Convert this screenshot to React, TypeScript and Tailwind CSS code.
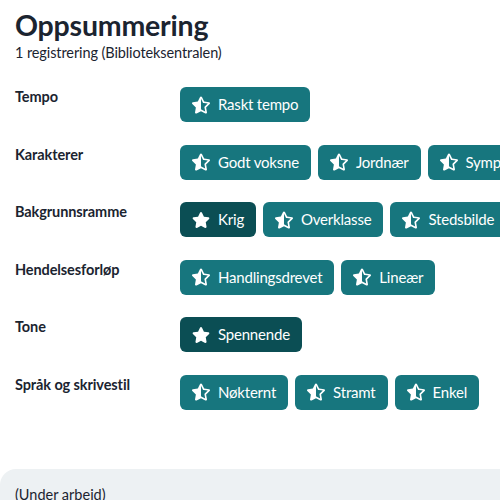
import { FaStar, FaStarHalfAlt } from "react-icons/fa";

interface Tag {
  label: string;
  full?: boolean;
}

interface Row {
  title: string;
  tags: Tag[];
}

const ROWS: Row[] = [
  { title: "Tempo", tags: [{ label: "Raskt tempo" }] },
  {
    title: "Karakterer",
    tags: [{ label: "Godt voksne" }, { label: "Jordnær" }, { label: "Sympatiske" }],
  },
  {
    title: "Bakgrunnsramme",
    tags: [{ label: "Krig", full: true }, { label: "Overklasse" }, { label: "Stedsbilde" }],
  },
  {
    title: "Hendelsesforløp",
    tags: [{ label: "Handlingsdrevet" }, { label: "Lineær" }],
  },
  { title: "Tone", tags: [{ label: "Spennende", full: true }] },
  {
    title: "Språk og skrivestil",
    tags: [{ label: "Nøkternt" }, { label: "Stramt" }, { label: "Enkel" }],
  },
];

function TagButton({ tag }: { tag: Tag }) {
  return (
    <button
      className={`flex h-[35px] shrink-0 items-center gap-2 whitespace-nowrap rounded-md px-3 text-[15px] tracking-[-0.2px] text-white ${
        tag.full ? "bg-[#0b4e54]" : "bg-[#17767e]"
      }`}
    >
      {tag.full ? (
        <FaStar className="h-[18px] w-[18px]" />
      ) : (
        <FaStarHalfAlt className="h-[18px] w-[18px]" />
      )}
      <span>{tag.label}</span>
    </button>
  );
}

export default function App() {
  return (
    <div
      className="h-[500px] w-[500px] overflow-hidden bg-white text-[#1b2430]"
      style={{ fontFamily: "Lato, 'Open Sans', sans-serif" }}
    >
      <div className="px-[15px] pt-[8px]">
        <h1 className="text-[28.5px] font-bold leading-[35px] tracking-[-0.2px]">Oppsummering</h1>
        <p className="text-[14.5px] leading-[20px] tracking-[-0.1px]">1 registrering (Biblioteksentralen)</p>
      </div>

      <div className="mt-[24px] flex flex-col gap-[22.5px] pl-[15px]">
        {ROWS.map((row) => (
          <div key={row.title} className="flex">
            <div className="w-[165px] shrink-0 text-[14.5px] font-bold leading-[20px] tracking-[-0.1px]">
              {row.title}
            </div>
            <div className="flex gap-[7px]">
              {row.tags.map((tag) => (
                <TagButton key={tag.label} tag={tag} />
              ))}
            </div>
          </div>
        ))}
      </div>

      <div className="mt-[59px] rounded-tl-2xl bg-[#edf1f3] px-[15px] pt-[16px]">
        <p className="text-[14.5px] leading-[20px]">(Under arbeid)</p>
      </div>
    </div>
  );
}
